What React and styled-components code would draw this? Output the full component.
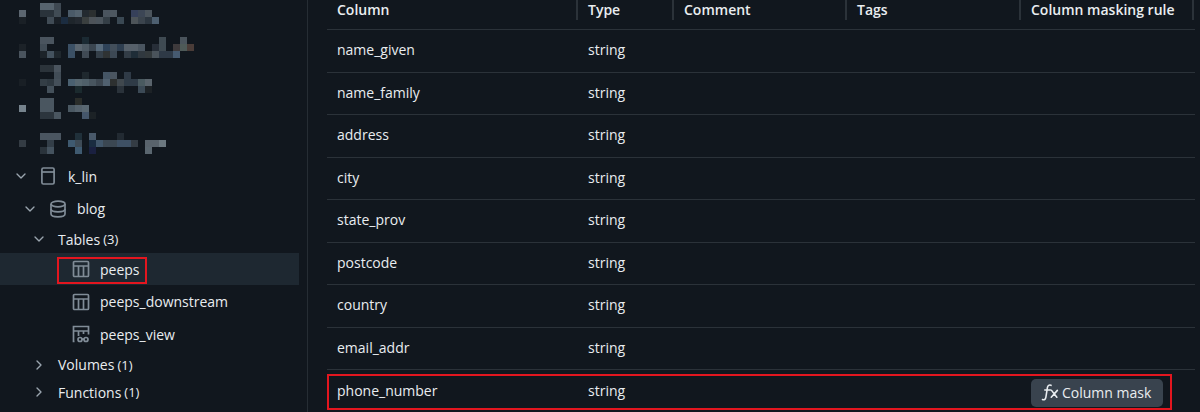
import React from "react";
import styled, { createGlobalStyle } from "styled-components";
import { ChevronDown, ChevronRight } from "lucide-react";

const columns = [
  "name_given",
  "name_family",
  "address",
  "city",
  "state_prov",
  "postcode",
  "country",
  "email_addr",
];

// pixelated (redacted) catalog names at the top of the tree: [column, row, colour]
const mosaic = [
  { top: 2.7, cells: [[3,0,"#56636e"],[4,0,"#56636e"],[5,0,"#3e4852"],[0,1,"#5c6670"],[3,1,"#2a333b"],[4,1,"#2a333b"],[5,1,"#414c55"],[7,1,"#4a5a68"],[8,1,"#53626e"],[9,1,"#232a30"],[10,1,"#2b2f30"],[12,1,"#4a545e"],[13,1,"#4d5760"],[16,1,"#36405a"],[17,1,"#3c4655"],[18,1,"#4b545c"],[0,2,"#1a2026"],[4,2,"#404b55"],[5,2,"#1a2027"],[6,2,"#1b2c40"],[7,2,"#1e252b"],[8,2,"#232930"],[9,2,"#3a3f3f"],[10,2,"#4d5359"],[11,2,"#4b545c"],[12,2,"#343e46"],[14,2,"#3a4853"],[16,2,"#4d5459"],[17,2,"#3b444d"],[18,2,"#2c3640"],[19,2,"#4d5f70"]] },
  { top: 36.7, cells: [[3,0,"#4a545e"],[4,0,"#4a545e"],[9,0,"#1b2a33"],[20,0,"#3f4a52"],[23,0,"#4a545c"],[0,1,"#1c2228"],[3,1,"#414c56"],[7,1,"#3b5065"],[8,1,"#5b6670"],[9,1,"#4e5a64"],[10,1,"#3a4550"],[11,1,"#56697a"],[12,1,"#2e4258"],[13,1,"#424e5a"],[14,1,"#2e3e50"],[15,1,"#56606a"],[16,1,"#56606a"],[17,1,"#4a5560"],[19,1,"#272e38"],[20,1,"#3f4a52"],[22,1,"#3e3a3c"],[23,1,"#4e5a58"],[24,1,"#4a3c38"],[0,2,"#4a545e"],[3,2,"#1c2329"],[4,2,"#44525e"],[5,2,"#1f272d"],[7,2,"#3b5065"],[9,2,"#404a54"],[11,2,"#343f49"],[12,2,"#2f3334"],[13,2,"#3c4854"],[15,2,"#323c46"],[16,2,"#1f2d38"],[17,2,"#30383f"],[18,2,"#33393c"],[19,2,"#4a535b"],[20,2,"#2e3946"],[21,2,"#2e3946"],[22,2,"#465a70"]] },
  { top: 64.7, cells: [[3,0,"#2b333a"],[4,0,"#2b333a"],[5,0,"#4a545e"],[5,1,"#414c56"],[9,1,"#1f282e"],[12,1,"#455565"],[13,1,"#4a5560"],[15,1,"#2f3a46"],[0,2,"#191f25"],[3,2,"#343e46"],[4,2,"#2e3840"],[5,2,"#45505a"],[7,2,"#4a6070"],[8,2,"#56666f"],[9,2,"#50606a"],[10,2,"#48555f"],[11,2,"#3c4650"],[12,2,"#50606f"],[13,2,"#2d3030"],[14,2,"#40484e"],[15,2,"#2f3b47"],[16,2,"#2f3b47"],[17,2,"#4a5a60"],[18,2,"#5a646c"],[4,3,"#44505a"],[8,3,"#1b2a2e"],[14,3,"#2a323a"],[17,3,"#3c4a56"],[18,3,"#1d2226"]] },
  { top: 98.3, cells: [[3,0,"#4a5660"],[4,0,"#4a5660"],[8,0,"#2a2d2a"],[0,1,"#76838d"],[3,1,"#4a5660"],[4,1,"#4a5660"],[7,1,"#4a5862"],[8,1,"#55626c"],[9,1,"#5a6872"],[3,2,"#2c353d"],[4,2,"#2c353d"],[5,2,"#4a5660"],[9,2,"#45566a"],[10,2,"#1c2226"]] },
  { top: 133.3, cells: [[3,0,"#4a5560"],[4,0,"#4a5560"],[5,0,"#4a5560"],[8,0,"#20303a"],[10,0,"#49596a"],[14,0,"#222a32"],[0,1,"#343c44"],[4,1,"#333e48"],[7,1,"#3f5a70"],[8,1,"#3e4b56"],[10,1,"#1a2c40"],[11,1,"#41566a"],[12,1,"#3b4752"],[13,1,"#3b4752"],[14,1,"#3e5064"],[15,1,"#3e5064"],[16,1,"#343c44"],[18,1,"#59636c"],[19,1,"#59636c"],[20,1,"#6c7880"],[3,2,"#2a333b"],[4,2,"#44525e"],[8,2,"#3f5a70"],[10,2,"#1a2040"],[18,2,"#5a666f"]] },
];

const GlobalStyle = createGlobalStyle`
  html, body {
    margin: 0;
    height: 412px;
    overflow: hidden;
    background: #11171e;
  }
`;

const Page = styled.div`
  display: flex;
  width: 1200px;
  height: 412px;
  overflow: hidden;
  background: #11171e;
  color: #e9edf0;
  font-family: "Open Sans", "Noto Sans", sans-serif;
  font-size: 14px;
`;

const Sidebar = styled.aside`
  width: 308px;
  flex-shrink: 0;
  padding-right: 8px;
  box-sizing: border-box;
  border-right: 1px solid #262d34;
`;

const Mosaic = styled.svg`
  display: block;
  width: 299px;
  height: 160px;
`;

const TreeRow = styled.div`
  position: relative;
  display: flex;
  align-items: center;
  height: ${(p) => p.$height}px;
  padding-left: ${(p) => p.$indent}px;
  background: ${(p) => (p.$selected ? "#1e2831" : "transparent")};
`;

const Twisty = styled.span`
  display: flex;
  width: 16px;
  margin-right: ${(p) => p.$gap}px;
  color: #9aa5af;
`;

const TreeIcon = styled.svg`
  width: 18px;
  height: 18px;
  margin-right: ${(p) => p.$gap}px;
  flex-shrink: 0;
  fill: none;
  stroke: #808c97;
  stroke-width: 1.7;
`;

const Count = styled.span`
  margin-left: 3px;
  font-size: 13px;
`;

const RedBox = styled.div`
  position: absolute;
  left: ${(p) => p.$left}px;
  top: ${(p) => p.$top}px;
  width: ${(p) => p.$width}px;
  height: ${(p) => p.$boxHeight}px;
  box-sizing: border-box;
  border: 2px solid #e3161f;
  pointer-events: none;
`;

const Main = styled.main`
  flex: 1;
  padding: 0 5px 0 19px;
`;

const HeadRow = styled.div`
  display: grid;
  grid-template-columns: 251px 96px 173px 174px 173px;
  height: 30px;
  box-sizing: border-box;
  border-bottom: 1px solid #2b3239;
`;

const HeadCell = styled.div`
  height: 20px;
  line-height: 20px;
  font-weight: 600;
  padding-left: 10px;
  border-right: 2px solid #2b3239;
  box-sizing: border-box;
  white-space: nowrap;
`;

const Row = styled.div`
  position: relative;
  display: grid;
  grid-template-columns: 250px 96px 173px 174px 175px;
  align-items: center;
  height: 42.5px;
  padding-bottom: 2px;
  box-sizing: border-box;
  border-bottom: ${(p) => (p.$last ? "none" : "1px solid #2b3239")};
`;

const Cell = styled.div`
  padding-left: 10px;
  box-sizing: border-box;
  white-space: nowrap;

  & + & {
    padding-left: 11px;
  }
`;

const MaskButton = styled.div`
  display: inline-flex;
  align-items: center;
  gap: 2px;
  width: 132px;
  height: 28px;
  margin-top: 5px;
  padding-left: 10px;
  box-sizing: border-box;
  border-radius: 5px;
  background: #39434e;
  color: #e9edf0;
`;

const FxIcon = styled.svg`
  width: 19px;
  height: 19px;
  fill: none;
  stroke: #e9edf0;
  stroke-width: 1.5;
  stroke-linecap: round;
`;

const CatalogIcon = () => (
  <TreeIcon viewBox="0 0 18 18" $gap={11}>
    <rect x="2.9" y="1" width="12.2" height="16" rx="1.5" />
    <path d="M2.9 5h12.2" />
  </TreeIcon>
);

const SchemaIcon = () => (
  <TreeIcon viewBox="0 0 18 18" $gap={10}>
    <ellipse cx="9" cy="4" rx="7" ry="2.8" />
    <path d="M2 4v10c0 1.6 3.1 2.8 7 2.8s7-1.2 7-2.8V4" />
    <path d="M2 9c0 1.6 3.1 2.8 7 2.8s7-1.2 7-2.8" />
  </TreeIcon>
);

const TableIcon = () => (
  <TreeIcon viewBox="0 0 18 18" $gap={10}>
    <rect x="1.5" y="1.5" width="15" height="15" rx="1" />
    <path d="M1.5 6h15M6.5 6v10.5M11.5 6v10.5" />
  </TreeIcon>
);

const ViewIcon = () => (
  <TreeIcon viewBox="0 0 18 18" $gap={10}>
    <path d="M2.5 16.5h-1V1.5h15v8" />
    <path d="M1.5 6h15M6.5 6v5M11.5 6v3" />
    <circle cx="8" cy="14.5" r="2" />
    <circle cx="14" cy="14.5" r="2" />
    <path d="M10 14.2h2" />
  </TreeIcon>
);

const App = () => (
  <>
    <GlobalStyle />
    <Page>
      <Sidebar>
        <Mosaic viewBox="0 0 299 160" shapeRendering="crispEdges">
          {mosaic.map((group) =>
            group.cells.map(([col, row, color]) => (
              <rect
                key={`${group.top}-${col}-${row}`}
                x={18.7 + col * 7}
                y={group.top + row * 7}
                width="7"
                height="7"
                fill={color}
              />
            ))
          )}
        </Mosaic>
        <TreeRow $height={32} $indent={13}>
          <Twisty $gap={10}><ChevronDown size={16} /></Twisty>
          <CatalogIcon />
          k_lin
        </TreeRow>
        <TreeRow $height={33} $indent={22}>
          <Twisty $gap={11}><ChevronDown size={16} /></Twisty>
          <SchemaIcon />
          blog
        </TreeRow>
        <TreeRow $height={28} $indent={31}>
          <Twisty $gap={11}><ChevronDown size={16} /></Twisty>
          Tables<Count>(3)</Count>
        </TreeRow>
        <TreeRow $height={32} $indent={72} $selected>
          <TableIcon />
          peeps
          <RedBox $left={57} $top={4} $width={90} $boxHeight={27} />
        </TreeRow>
        <TreeRow $height={33} $indent={72}>
          <TableIcon />
          peeps_downstream
        </TreeRow>
        <TreeRow $height={32} $indent={72}>
          <ViewIcon />
          peeps_view
        </TreeRow>
        <TreeRow $height={29} $indent={31}>
          <Twisty $gap={11}><ChevronRight size={16} /></Twisty>
          Volumes<Count>(1)</Count>
        </TreeRow>
        <TreeRow $height={26} $indent={31}>
          <Twisty $gap={11}><ChevronRight size={16} /></Twisty>
          Functions<Count>(1)</Count>
        </TreeRow>
      </Sidebar>
      <Main>
        <HeadRow>
          <HeadCell>Column</HeadCell>
          <HeadCell>Type</HeadCell>
          <HeadCell>Comment</HeadCell>
          <HeadCell>Tags</HeadCell>
          <HeadCell>Column masking rule</HeadCell>
        </HeadRow>
        {columns.map((name) => (
          <Row key={name}>
            <Cell>{name}</Cell>
            <Cell>string</Cell>
          </Row>
        ))}
        <Row $last>
          <Cell>phone_number</Cell>
          <Cell>string</Cell>
          <Cell />
          <Cell />
          <Cell>
            <MaskButton>
              <FxIcon viewBox="0 0 18 18">
                <path d="M9.5 2.2c-1.8-.8-3 .1-3.4 2L4.6 13.6c-.4 2-1.6 2.8-3.2 2" />
                <path d="M3.6 6.6h5.4" />
                <path d="M10 7l5 6.5M15.5 7l-5.8 6.5" />
              </FxIcon>
              Column mask
            </MaskButton>
          </Cell>
          <RedBox $left={0} $top={4} $width={845} $boxHeight={36} />
        </Row>
      </Main>
    </Page>
  </>
);

export default App;
